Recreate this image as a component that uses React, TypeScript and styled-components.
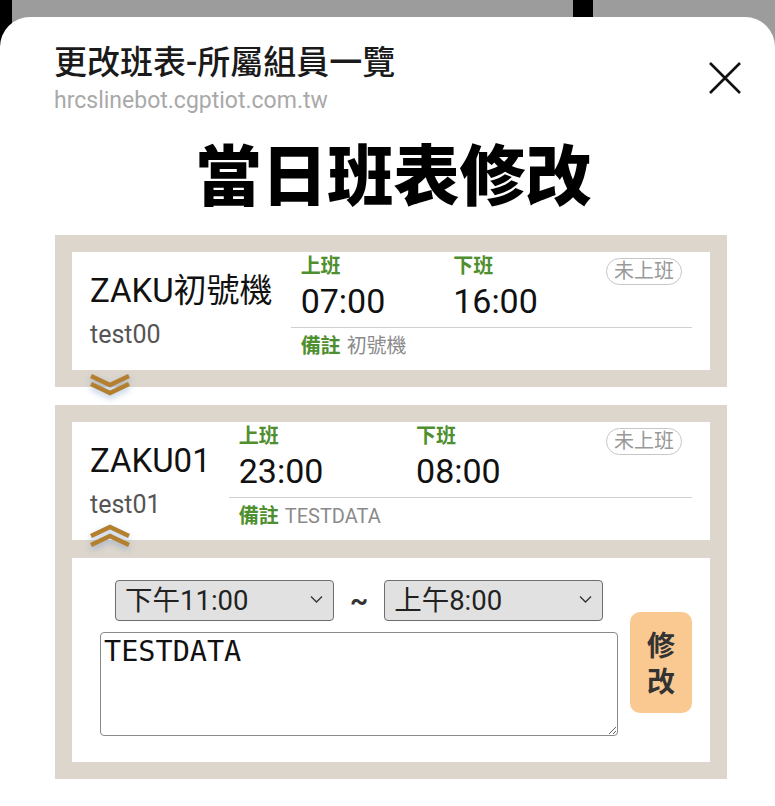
import * as React from 'react';
import styled, { createGlobalStyle } from 'styled-components';

const GlobalStyle = createGlobalStyle`
    html, body {
        margin: 0;
        padding: 0;
    }
    body {
        font-family: Roboto, "Noto Sans CJK TC", sans-serif;
        color: #111;
    }
    * {
        box-sizing: border-box;
    }
`;

const GREEN = '#4f8f2f';
const BEIGE = '#dcd6cd';

const Backdrop = styled.div`
    min-height: 100vh;
    padding-top: 17px;
    background: linear-gradient(to right, #000 0 12px, #9c9c9c 12px 573px, #000 573px 593px, #9c9c9c 593px);
`;

const Sheet = styled.div`
    background: #fff;
    border-radius: 30px 30px 0 0;
    min-height: calc(100vh - 17px);
    padding-bottom: 30px;
`;

const Header = styled.div`
    display: flex;
    justify-content: space-between;
    align-items: flex-start;
    padding: 26px 33px 0 54px;
`;

const Title = styled.div`
    font-size: 33px;
    font-weight: 500;
    line-height: 40px;
    color: #1a1a1a;
`;

const Subtitle = styled.div`
    font-size: 23px;
    line-height: 28px;
    color: #a9a9a9;
    margin-top: 4px;
`;

const CloseButton = styled.button`
    border: none;
    background: none;
    padding: 0;
    margin-top: 19px;
    width: 34px;
    height: 32px;
    cursor: pointer;
`;

const Heading = styled.h1`
    margin: 23px 0 0;
    padding-left: 12px;
    text-align: center;
    font-size: 66px;
    font-weight: 900;
    line-height: 80px;
    color: #000;
`;

const CardList = styled.div`
    display: flex;
    flex-direction: column;
    gap: 18px;
    margin: 17px 48px 0 55px;
`;

const Card = styled.div`
    background: ${BEIGE};
    padding: 17px;
    display: flex;
    flex-direction: column;
    gap: 18px;
`;

const Row = styled.div`
    position: relative;
    background: #fff;
    display: flex;
    align-items: center;
    gap: 18px;
    height: 118px;
    padding: 0 18px 0 18px;
`;

const NameCol = styled.div`
    display: flex;
    flex-direction: column;
    margin-top: -2px;
`;

const Name = styled.div`
    font-size: 33px;
    line-height: 40px;
    color: #111;
    white-space: nowrap;
`;

const UserId = styled.div`
    font-size: 25px;
    line-height: 30px;
    color: #555;
    margin-top: 9px;
`;

const InfoCol = styled.div`
    flex: 1;
    display: flex;
    flex-direction: column;
    align-self: stretch;
    padding-top: 2px;
`;

const TopLine = styled.div`
    display: flex;
    align-items: flex-start;
    padding: 0 10px;
`;

const TimeBlock = styled.div`
    width: 40%;
`;

const Label = styled.span`
    font-size: 20px;
    font-weight: 700;
    line-height: 24px;
    color: ${GREEN};
`;

const Time = styled.div`
    font-size: 34px;
    line-height: 38px;
    margin-top: 4px;
    color: #111;
`;

const Pill = styled.span`
    margin-left: auto;
    margin-top: 4px;
    border: 1.5px solid #c6c6c6;
    border-radius: 14px;
    padding: 0 7px;
    font-size: 20px;
    line-height: 25px;
    color: #999;
`;

const Divider = styled.div`
    border-top: 1.5px solid #d0d0d0;
    margin-top: 7px;
`;

const Memo = styled.div`
    display: flex;
    align-items: baseline;
    gap: 6px;
    padding: 6px 10px 0;
    font-size: 20px;
    line-height: 24px;
`;

const MemoText = styled.span`
    color: #8a8a8a;
    font-size: 20px;
`;

const Toggle = styled.div<{ $open: boolean }>`
    position: absolute;
    left: 17px;
    bottom: ${props => (props.$open ? '-9px' : '-27px')};
    width: 42px;
    height: 25px;
    filter: drop-shadow(0 3px 3px rgba(90, 130, 190, 0.45));
`;

const EditPanel = styled.div`
    background: #fff;
    display: flex;
    align-items: center;
    gap: 12px;
    padding: 22px 18px 26px 28px;
`;

const EditFields = styled.div`
    flex: 1;
    display: flex;
    flex-direction: column;
    gap: 11px;
`;

const SelectRow = styled.div`
    display: flex;
    align-items: center;
    gap: 16px;
    padding-left: 15px;
`;

const SelectBox = styled.div`
    position: relative;
    width: 219px;
    height: 41px;
`;

const Select = styled.select`
    appearance: none;
    width: 100%;
    height: 100%;
    border: 1.5px solid #6e6e6e;
    border-radius: 4px;
    background: #e1e1e1;
    padding: 0 30px 0 9px;
    font-family: Roboto, "Noto Sans CJK TC", sans-serif;
    font-size: 27.5px;
    color: #222;
`;

const SelectArrow = styled.span`
    position: absolute;
    right: 11px;
    top: 15px;
    width: 13px;
    height: 9px;
    pointer-events: none;
    display: flex;
`;

const Tilde = styled.span`
    font-size: 28px;
    font-weight: 700;
    color: #333;
`;

const Note = styled.textarea`
    width: 100%;
    height: 104px;
    border: 1.5px solid #8a8a8a;
    border-radius: 4px;
    padding: 2px 3px;
    font-family: "DejaVu Sans Mono", monospace;
    font-size: 28.5px;
    line-height: 34px;
    color: #111;
    resize: vertical;
`;

const SubmitButton = styled.button`
    width: 62px;
    height: 101px;
    margin-top: 8px;
    border: none;
    border-radius: 10px;
    background: #f9c991;
    font-family: "Noto Sans CJK TC", sans-serif;
    font-size: 28px;
    font-weight: 700;
    line-height: 36px;
    color: #333;
    padding: 0 15px;
    cursor: pointer;
`;

const DoubleChevron = ({ up }: { up: boolean }) => (
    <svg width="42" height="25" viewBox="0 0 42 25">
        <g fill="none" stroke="#b4802f" strokeWidth="4.5" strokeLinejoin="miter">
            {up ? (
                <>
                    <polyline points="2,12 21,3 40,12" />
                    <polyline points="2,21 21,12 40,21" />
                </>
            ) : (
                <>
                    <polyline points="2,4 21,13 40,4" />
                    <polyline points="2,12 21,21 40,12" />
                </>
            )}
        </g>
    </svg>
);

type Shift = {
    name: string;
    id: string;
    start: string;
    end: string;
    memo: string;
    open: boolean;
};

const shifts: Shift[] = [
    { name: 'ZAKU初號機', id: 'test00', start: '07:00', end: '16:00', memo: '初號機', open: false },
    { name: 'ZAKU01', id: 'test01', start: '23:00', end: '08:00', memo: 'TESTDATA', open: true },
];

const ShiftRow = ({ shift }: { shift: Shift }) => (
    <Row>
        <NameCol>
            <Name>{shift.name}</Name>
            <UserId>{shift.id}</UserId>
        </NameCol>
        <InfoCol>
            <TopLine>
                <TimeBlock>
                    <Label>上班</Label>
                    <Time>{shift.start}</Time>
                </TimeBlock>
                <TimeBlock>
                    <Label>下班</Label>
                    <Time>{shift.end}</Time>
                </TimeBlock>
                <Pill>未上班</Pill>
            </TopLine>
            <Divider />
            <Memo>
                <Label>備註</Label>
                <MemoText>{shift.memo}</MemoText>
            </Memo>
        </InfoCol>
        <Toggle $open={shift.open}>
            <DoubleChevron up={shift.open} />
        </Toggle>
    </Row>
);

const SelectArrowIcon = () => (
    <SelectArrow>
        <svg width="13" height="9" viewBox="0 0 13 9">
            <polyline points="1,1.5 6.5,7 12,1.5" fill="none" stroke="#333" strokeWidth="1.3" />
        </svg>
    </SelectArrow>
);

const App = () => {
    const [start, setStart] = React.useState('23:00');
    const [end, setEnd] = React.useState('08:00');
    const [note, setNote] = React.useState('TESTDATA');

    return (
        <Backdrop>
            <GlobalStyle />
            <Sheet>
                <Header>
                    <div>
                        <Title>更改班表-所屬組員一覽</Title>
                        <Subtitle>hrcslinebot.cgptiot.com.tw</Subtitle>
                    </div>
                    <CloseButton aria-label="close">
                        <svg width="34" height="32" viewBox="0 0 34 32">
                            <path d="M2 1 L32 31 M32 1 L2 31" stroke="#111" strokeWidth="2.6" fill="none" />
                        </svg>
                    </CloseButton>
                </Header>
                <Heading>當日班表修改</Heading>
                <CardList>
                    <Card>
                        <ShiftRow shift={shifts[0]} />
                    </Card>
                    <Card>
                        <ShiftRow shift={shifts[1]} />
                        <EditPanel>
                            <EditFields>
                                <SelectRow>
                                    <SelectBox>
                                        <Select value={start} onChange={e => setStart(e.target.value)}>
                                            <option value="22:00">下午10:00</option>
                                            <option value="23:00">下午11:00</option>
                                        </Select>
                                        <SelectArrowIcon />
                                    </SelectBox>
                                    <Tilde>~</Tilde>
                                    <SelectBox>
                                        <Select value={end} onChange={e => setEnd(e.target.value)}>
                                            <option value="07:00">上午7:00</option>
                                            <option value="08:00">上午8:00</option>
                                        </Select>
                                        <SelectArrowIcon />
                                    </SelectBox>
                                </SelectRow>
                                <Note value={note} onChange={e => setNote(e.target.value)} />
                            </EditFields>
                            <SubmitButton>修改</SubmitButton>
                        </EditPanel>
                    </Card>
                </CardList>
            </Sheet>
        </Backdrop>
    );
};

export default App;
